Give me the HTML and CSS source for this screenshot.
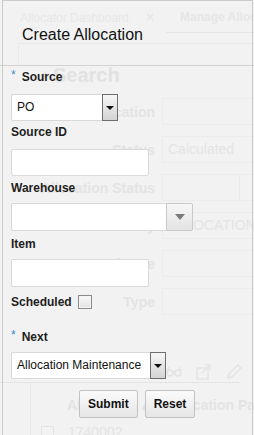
FILE: index.html
```html
<!DOCTYPE html>
<html lang="en">
<head>
    <meta charset="UTF-8">
    <meta name="viewport" content="width=device-width, initial-scale=1.0">
    <title>Create Allocation</title>
    <link rel="stylesheet" href="styles.css">
</head>
<body>

<!-- page behind the dialog, faded out -->
<div class="page" aria-hidden="true">
    <div class="tabs">
        <span class="tab">Allocator Dashboard <span class="tab-close">&times;</span></span>
        <span class="tab tab-other">Manage Allocations</span>
    </div>
    <div class="band"></div>
    <div class="rule"></div>

    <div class="search-title"><span class="caret"></span>Search</div>

    <div class="search-form">
        <div class="row"><span class="row-label">Allocation</span><span class="row-box"></span></div>
        <div class="row"><span class="row-label">Status</span><span class="row-box row-text">Calculated</span></div>
        <div class="row"><span class="row-label">Allocation Status</span><span class="row-box row-choice"><span class="row-btn"></span></span></div>
        <div class="row"><span class="row-label">Created By</span><span class="row-box row-text">ALLOCATION_ADMIN</span></div>
        <div class="row"><span class="row-label">Created Date</span><span class="row-box"></span></div>
        <div class="row"><span class="row-label">Type</span><span class="row-box"></span></div>
    </div>

    <div class="toolbar">
        <span class="tool-menu">Actions &#9662;</span>
        <span class="tool-menu">View &#9662;</span>
        <svg class="tool-icon" width="16" height="12" viewBox="0 0 16 12">
            <circle cx="4" cy="7" r="3" fill="none" stroke="#e4e4e4" stroke-width="1.5"/>
            <circle cx="12" cy="7" r="3" fill="none" stroke="#e4e4e4" stroke-width="1.5"/>
            <path d="M7 6 h2 M1 5 L3 1 M15 5 L13 1" stroke="#e4e4e4" stroke-width="1.5" fill="none"/>
        </svg>
        <svg class="tool-icon" width="16" height="16" viewBox="0 0 16 16">
            <rect x="1" y="4" width="11" height="11" fill="none" stroke="#e4e4e4" stroke-width="1.5"/>
            <path d="M6 9 L14 1 M9 1 h5 v5" stroke="#e4e4e4" stroke-width="1.5" fill="none"/>
        </svg>
        <svg class="tool-icon" width="16" height="16" viewBox="0 0 16 16">
            <path d="M2 14 L3 10 L12 1 L15 4 L6 13 Z" stroke="#e4e4e4" stroke-width="1.5" fill="none"/>
        </svg>
    </div>

    <div class="table">
        <div class="table-head">
            <span class="col-first">Allocation &#9650;</span>
            <span>Allocation Parent</span>
        </div>
        <div class="table-row">
            <span class="row-check"></span>
            <span>1740002</span>
        </div>
    </div>
</div>

<!-- dialog -->
<div class="dialog">
    <div class="dialog-title">Create Allocation</div>

    <form class="dialog-form">
        <div class="field field-source">
            <label class="field-label"><span class="required">*</span>Source</label>
            <div class="choice choice-dark choice-source">
                <span class="choice-value">PO</span>
                <span class="choice-btn"><span class="arrow"></span></span>
            </div>
        </div>

        <div class="field field-source-id">
            <label class="field-label" for="source-id">Source ID</label>
            <input type="text" id="source-id" class="text-input">
        </div>

        <div class="field field-warehouse">
            <label class="field-label">Warehouse</label>
            <div class="choice choice-light choice-warehouse">
                <span class="choice-value"></span>
                <span class="choice-btn"><span class="arrow"></span></span>
            </div>
        </div>

        <div class="field field-item">
            <label class="field-label" for="item">Item</label>
            <input type="text" id="item" class="text-input">
        </div>

        <div class="field field-scheduled">
            <label class="field-label" for="scheduled">Scheduled</label>
            <span class="check-box" id="scheduled"></span>
        </div>

        <div class="field field-next">
            <label class="field-label"><span class="required">*</span>Next</label>
            <div class="choice choice-dark choice-next">
                <span class="choice-value">Allocation Maintenance</span>
                <span class="choice-btn"><span class="arrow"></span></span>
            </div>
        </div>

        <div class="actions">
            <button type="button" class="btn">Submit</button>
            <button type="button" class="btn">Reset</button>
        </div>
    </form>
</div>

</body>
</html>
```

FILE: styles.css
```css
body {
    margin: 0;
    font-family: "Liberation Sans", Arial, sans-serif;
    background-color: #f2f2f2;
    width: 254px;
    height: 435px;
    overflow: hidden;
    position: relative;
}

/* ---------- faded page underneath ---------- */
.page {
    height: 435px;
    overflow: hidden;
    color: #e4e4e4;
    font-size: 13px;
}
.tabs {
    display: flex;
    height: 33px;
    white-space: nowrap;
}
.tab {
    width: 166px;
    padding-left: 20px;
    line-height: 34px;
    font-size: 12px;
    box-sizing: border-box;
    flex-shrink: 0;
    color: #e8e8e8;
}
.tab-close {
    margin-left: 14px;
    font-size: 14px;
    font-weight: bold;
}
.tab-other {
    flex: 1;
    width: auto;
    padding-left: 14px;
    font-weight: bold;
    font-size: 12px;
    color: #e6e6e6;
    border-bottom: 1px solid #e6e6e6;
}
.band {
    margin-top: 10px;
    margin-left: 18px;
    height: 21px;
    border-top: 1px solid #e9e9e9;
    border-left: 1px solid #e9e9e9;
}
.rule {
    height: 1px;
    background-color: #d2d2d2;
}
.search-title {
    display: flex;
    align-items: center;
    margin-left: 40px;
    height: 18px;
    font-size: 20px;
    font-weight: bold;
    color: #e2e2e2;
}
.caret {
    width: 0;
    height: 0;
    border-top: 4px solid transparent;
    border-bottom: 4px solid transparent;
    border-right: 6px solid #e4e4e4;
    margin-right: 7px;
}
.search-form {
    margin-top: 14px;
    display: flex;
    flex-direction: column;
    gap: 11px;
}
.row {
    display: flex;
    align-items: center;
    height: 27px;
}
.row-label {
    width: 155px;
    text-align: right;
    font-weight: bold;
    font-size: 14px;
    white-space: nowrap;
}
.row-box {
    flex: 1;
    height: 27px;
    margin-left: 7px;
    border: 1px solid #ececec;
    border-right: none;
    box-sizing: border-box;
    display: flex;
    justify-content: flex-end;
}
.row-text {
    justify-content: flex-start;
    padding-left: 5px;
    line-height: 25px;
    font-size: 14px;
    white-space: nowrap;
    overflow: hidden;
}
.row-btn {
    width: 14px;
    border-left: 1px solid #e9e9e9;
}
.toolbar {
    margin-top: 47px;
    width: 200px;
    height: 20px;
    border-bottom: 1px solid #e4e4e4;
    display: flex;
    align-items: center;
    padding-left: 40px;
    gap: 14px;
    white-space: nowrap;
    font-size: 14px;
}
.tool-icon {
    flex-shrink: 0;
}
.table {
    margin-left: 30px;
    border-left: 1px solid #e9e9e9;
    height: 60px;
}
.table-head {
    display: flex;
    gap: 14px;
    padding-left: 36px;
    padding-top: 14px;
    font-weight: bold;
    font-size: 14px;
    white-space: nowrap;
}
.table-row {
    display: flex;
    align-items: center;
    gap: 14px;
    padding-left: 10px;
    padding-top: 11px;
    font-size: 14px;
}
.row-check {
    width: 11px;
    height: 11px;
    border: 1px solid #e4e4e4;
}

/* ---------- dialog ---------- */
.dialog {
    position: absolute;
    top: 0;
    left: 2px;
    width: 251px;
    height: 435px;
    box-sizing: border-box;
    border: 1px solid #cbcbcb;
    border-bottom: none;
    color: #222;
}
.dialog-title {
    padding: 25px 0 0 19px;
    font-size: 16px;
    line-height: 18px;
    color: #111;
}
.dialog-form {
    padding-left: 8px;
    margin-top: 26px;
}
.field-label {
    display: block;
    font-size: 12px;
    font-weight: bold;
    line-height: 14px;
    color: #1e1e1e;
}
.required {
    color: #3d8bd0;
    font-weight: normal;
    margin-right: 6px;
    position: relative;
    top: -2px;
}
.field-source .field-label { margin-bottom: 10px; }
.field-source-id { margin-top: 4px; }
.field-source-id .field-label { margin-bottom: 10px; }
.field-warehouse { margin-top: 5px; }
.field-warehouse .field-label { margin-bottom: 8px; }
.field-item { margin-top: 6px; }
.field-item .field-label { margin-bottom: 8px; }
.field-scheduled {
    margin-top: 8px;
    display: flex;
    align-items: center;
    gap: 6px;
}
.field-next { margin-top: 21px; }
.field-next .field-label { margin-bottom: 8px; }

.text-input {
    display: block;
    width: 138px;
    height: 27px;
    margin: 0;
    padding: 0 4px;
    box-sizing: border-box;
    border: 1px solid #dadada;
    border-radius: 2px;
    background-color: #fff;
    font-family: inherit;
    font-size: 12px;
}
.field-item .text-input { height: 28px; }

.choice {
    display: flex;
    height: 27px;
    box-sizing: border-box;
}
.choice-value {
    flex: 1;
    border: 1px solid #d8d8d8;
    border-right: none;
    border-radius: 2px 0 0 2px;
    background-color: #fff;
    padding-left: 5px;
    font-size: 12px;
    line-height: 25px;
    color: #111;
    white-space: nowrap;
    overflow: hidden;
}
.choice-btn {
    display: flex;
    align-items: center;
    justify-content: center;
    box-sizing: border-box;
}
.choice-dark .choice-btn {
    width: 16px;
    border: 1px solid #6e6e6e;
    background: linear-gradient(#f6f6f6, #d4d4d4);
}
.choice-dark .arrow {
    border-left: 4px solid transparent;
    border-right: 4px solid transparent;
    border-top: 4px solid #111;
}
.choice-light .choice-btn {
    width: 27px;
    border: 1px solid #c9c9c9;
    border-radius: 0 2px 2px 0;
    background: linear-gradient(#f7f7f7, #e3e3e3);
}
.choice-light .arrow {
    border-left: 5px solid transparent;
    border-right: 5px solid transparent;
    border-top: 6px solid #7b7b7b;
}
.choice-source { width: 107px; }
.choice-warehouse { width: 182px; height: 28px; }
.choice-next { width: 155px; }

.check-box {
    width: 12px;
    height: 12px;
    border: 1px solid #8a8a8a;
    background: linear-gradient(#fafafa, #e2e2e2);
    box-shadow: inset 0 0 0 1px #f4f4f4;
}

.actions {
    display: flex;
    gap: 7px;
    padding-left: 68px;
    margin-top: 11px;
}
.btn {
    height: 28px;
    padding: 0 8px;
    border: 1px solid #c2c2c2;
    border-radius: 2px;
    background: linear-gradient(#fbfbfb, #e6e6e6);
    font-family: inherit;
    font-size: 12px;
    font-weight: bold;
    color: #111;
    cursor: pointer;
}
.btn:hover {
    background: linear-gradient(#ffffff, #ededed);
}
```
